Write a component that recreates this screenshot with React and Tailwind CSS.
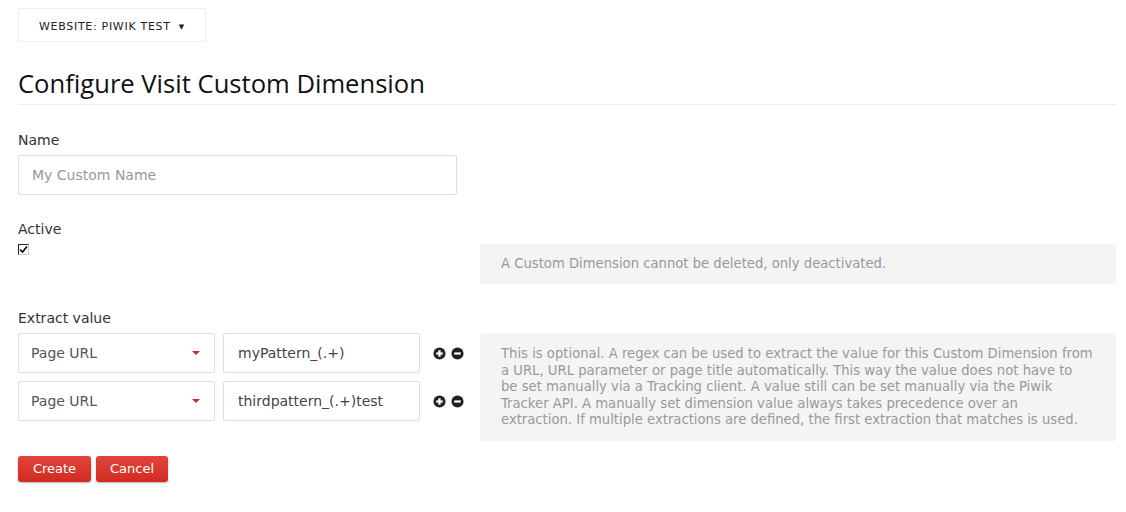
function CircleIcon({ minus }) {
  return (
    <svg width="13" height="13" viewBox="0 0 14 14">
      <circle cx="7" cy="7" r="6.5" fill="#222" />
      <rect x="3.5" y="5.8" width="7" height="2.4" fill="#fff" />
      {!minus && <rect x="5.8" y="3.5" width="2.4" height="7" fill="#fff" />}
    </svg>
  );
}

function ExtractionRow({ pattern }) {
  return (
    <div className="flex items-center">
      <div className="w-[197px] h-10 border border-[#ddd] rounded-[2px] flex items-center justify-between pl-[12px] pr-[14px] text-[14px] text-[#555]">
        <span>Page URL</span>
        <span className="w-0 h-0 border-l-[4px] border-r-[4px] border-t-[4px] border-l-transparent border-r-transparent border-t-[#d4291f]" />
      </div>
      <div className="ml-[8px] w-[197px] h-10 border border-[#ddd] rounded-[2px] flex items-center px-[14px] text-[14px] text-[#444]">
        {pattern}
      </div>
      <div className="ml-[13px] flex items-center gap-[5px]">
        <CircleIcon />
        <CircleIcon minus />
      </div>
    </div>
  );
}

export default function App() {
  return (
    <div className="min-h-screen bg-white pl-[18px] pr-[10px] pt-[8px] text-[#333]" style={{ fontFamily: '"DejaVu Sans", Verdana, sans-serif' }}>
      <div className="inline-flex items-center h-[34px] w-[188px] border border-[#eee] pl-[20px] pt-[4px] text-[11px] tracking-[0.7px] text-[#222]">
        WEBSITE: PIWIK TEST
        <span className="ml-[8px] text-[7px]">▼</span>
      </div>

      <h2 className="mt-[27px] pb-[5px] border-b border-[#eee] text-[25.6px] text-[#111] font-normal leading-[30px]" style={{ fontFamily: '"Open Sans", sans-serif' }}>
        Configure Visit Custom Dimension
      </h2>

      <div className="mt-[25px] text-[14px] text-[#333] leading-[20px]">Name</div>
      <div className="mt-[5px] w-[439px] h-10 border border-[#ddd] rounded-[2px] flex items-center px-[13px] text-[14px] text-[#999]">
        My Custom Name
      </div>

      <div className="mt-[24px] flex">
        <div className="w-[462px]">
          <div className="text-[14px] leading-[20px]">Active</div>
          <div className="mt-[5px] w-[11px] h-[11px] border border-[#222] border-r-[#ccc] border-b-[#ccc] flex items-center justify-center">
            <svg width="9" height="9" viewBox="0 0 9 9">
              <path d="M1 4.5 L3.5 7 L8 1.5" stroke="#000" strokeWidth="1.6" fill="none" />
            </svg>
          </div>
        </div>
        <div className="mt-[25px] flex-1 h-10 bg-[#f4f4f4] rounded-[2px] flex items-center px-[21px] text-[13.2px] text-[#999]">
          A Custom Dimension cannot be deleted, only deactivated.
        </div>
      </div>

      <div className="mt-[24px] text-[14px] leading-[20px]">Extract value</div>
      <div className="mt-[5px] flex">
        <div className="w-[462px] flex flex-col gap-[8px]">
          <ExtractionRow pattern="myPattern_(.+)" />
          <ExtractionRow pattern="thirdpattern_(.+)test" />
        </div>
        <div className="flex-1 h-[108px] bg-[#f4f4f4] rounded-[2px] pl-[21px] pr-[12px] pt-[13px] text-[13.2px] leading-[16.5px] text-[#999]">
          This is optional. A regex can be used to extract the value for this Custom Dimension from<br />
          a URL, URL parameter or page title automatically. This way the value does not have to<br />
          be set manually via a Tracking client. A value still can be set manually via the Piwik<br />
          Tracker API. A manually set dimension value always takes precedence over an<br />
          extraction. If multiple extractions are defined, the first extraction that matches is used.
        </div>
      </div>

      <div className="mt-[15px] flex gap-[5px]">
        <button className="w-[73px] h-[26px] rounded-[3px] bg-gradient-to-b from-[#e0443c] to-[#d22a20] text-white text-[13px] shadow-[0_1px_2px_rgba(0,0,0,0.3)]">
          Create
        </button>
        <button className="w-[72px] h-[26px] rounded-[3px] bg-gradient-to-b from-[#e0443c] to-[#d22a20] text-white text-[13px] shadow-[0_1px_2px_rgba(0,0,0,0.3)]">
          Cancel
        </button>
      </div>
    </div>
  );
}
